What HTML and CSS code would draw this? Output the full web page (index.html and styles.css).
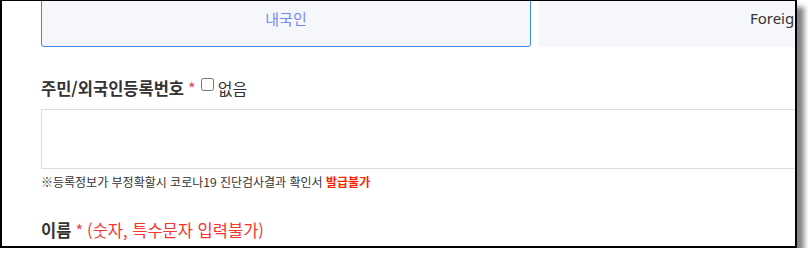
FILE: index.html
```html
<!DOCTYPE html>
<html lang="ko">
<head>
<meta charset="utf-8">
<link rel="stylesheet" href="styles.css">
</head>
<body>
<div class="frame">
  <div class="content">
    <div class="tabs">
      <div class="tab active">내국인</div>
      <div class="tab">Foreigner</div>
    </div>
    <div class="field">
      <div class="label"><span class="lbl">주민/외국인등록번호</span> <span class="req">*</span><input type="checkbox" class="chk"><span class="none">없음</span></div>
      <div class="input"></div>
      <div class="note">※등록정보가 부정확할시 코로나19 진단검사결과 확인서 <b class="warn">발급불가</b></div>
    </div>
    <div class="field2">
      <div class="label"><span class="lbl">이름</span> <span class="req">*</span> <span class="hint">(숫자, 특수문자 입력불가)</span></div>
    </div>
  </div>
</div>
</body>
</html>
```
FILE: styles.css
```css
html, body {
  margin: 0;
  padding: 0;
  background: #fff;
}
body {
  font-family: "Noto Sans CJK KR", "Noto Sans", sans-serif;
  color: #333;
}
.frame {
  width: 793px;
  height: 245px;
  border-left: 2px solid #000;
  border-top: 1px solid #000;
  border-right: 2px solid #000;
  border-bottom: 2px solid #000;
  box-shadow: 7px 7px 5px rgba(90, 90, 95, 0.75);
  overflow: hidden;
  background: #fff;
}
.content {
  padding-left: 39px;
  margin-top: -12px;
}
.tabs {
  display: flex;
  gap: 8px;
}
.tab {
  flex: 0 0 490px;
  box-sizing: border-box;
  height: 58px;
  display: flex;
  align-items: center;
  justify-content: center;
  background: #f6f7fb;
  border-radius: 3px;
  font-family: "Noto Sans", "Noto Sans CJK KR", sans-serif;
  font-size: 15px;
  color: #333;
}
.tab.active {
  border: 1px solid #3b87f5;
  color: #7388f2;
  font-family: "Noto Sans CJK KR", sans-serif;
}
.field {
  margin-top: 29px;
}
.label {
  display: flex;
  align-items: center;
  font-size: 16.5px;
  height: 24px;
}
.lbl {
  font-weight: 600;
  color: #333;
}
.req {
  color: #e8475f;
  margin-left: 4px;
  font-weight: 400;
}
.chk {
  width: 13px;
  height: 13px;
  margin: -8px 4px 0 5px;
}
.none {
  font-size: 16px;
}
.input {
  margin-top: 9px;
  height: 58px;
  border: 1px solid #ddd;
  width: 800px;
}
.note {
  margin-top: 4px;
  font-size: 12px;
  color: #333;
}
.warn {
  color: #f20;
  font-weight: 700;
}
.field2 {
  margin-top: 28px;
}
.hint {
  color: #f6352f;
  margin-left: 4px;
}
```
